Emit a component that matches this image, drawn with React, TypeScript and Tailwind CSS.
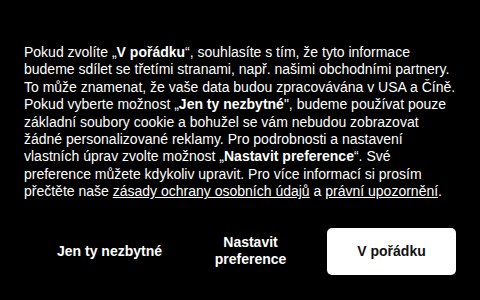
export default function App() {
  return (
    <div
      className="flex h-[300px] w-[480px] flex-col bg-black px-6 pt-[44px] text-white"
      style={{ fontFamily: '"Liberation Sans", Arial, sans-serif' }}
    >
      <p className="text-[14px] leading-[17.4px]">
        Pokud zvolíte „<b>V pořádku</b>“, souhlasíte s tím, že tyto informace budeme sdílet se třetími
        stranami, např. našimi obchodními partnery. To může znamenat, že vaše data budou zpracovávána v
        USA a Číně. Pokud vyberte možnost „<b>Jen ty nezbytné</b>", budeme používat pouze základní soubory
        cookie a bohužel se vám nebudou zobrazovat žádné personalizované reklamy. Pro podrobnosti a
        nastavení vlastních úprav zvolte možnost „<b>Nastavit preference</b>“. Své preference můžete
        kdykoliv upravit. Pro více informací si prosím přečtěte naše{" "}
        <a className="underline">zásady ochrany osobních údajů</a> a{" "}
        <a className="underline">právní upozornění</a>.
      </p>
      <div className="mt-[27px] flex justify-end gap-3">
        <button className="h-[47px] w-[129px] text-[14px] font-bold leading-[17px]">Jen ty nezbytné</button>
        <button className="h-[47px] w-[129px] text-[14px] font-bold leading-[17px]">
          Nastavit
          <br />
          preference
        </button>
        <button className="h-[47px] w-[129px] rounded-[5px] bg-white text-[14px] font-bold text-[#111]">
          V pořádku
        </button>
      </div>
    </div>
  );
}
